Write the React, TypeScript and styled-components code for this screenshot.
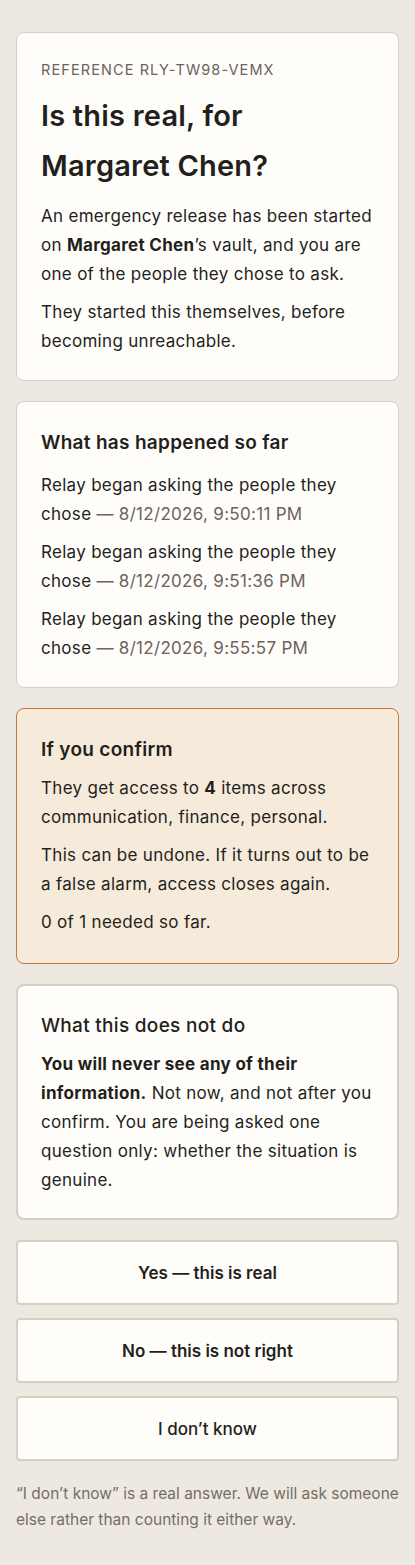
import React from "react";
import styled, { createGlobalStyle, css } from "styled-components";

const GlobalStyle = createGlobalStyle`
  * { box-sizing: border-box; }
  body {
    margin: 0;
    background: #eee9e0;
    font-family: Inter, "Noto Sans", sans-serif;
    color: #231f1c;
  }
`;

const Page = styled.main`
  display: flex;
  flex-direction: column;
  gap: 20px;
  padding: 32px 16px 40px;
`;

const Card = styled.section<{ $tone?: "plain" | "warm" | "strong" }>`
  background: #fffdf9;
  border: 1px solid #d6cfc3;
  border-radius: 8px;
  padding: 27px 24px 24px;
  ${({ $tone }) =>
    $tone === "warm" &&
    css`
      background: #f6eada;
      border-color: #c4773b;
      padding-bottom: 26px;
    `}
  ${({ $tone }) =>
    $tone === "strong" &&
    css`
      border: 2px solid #d6cfc3;
      padding: 26px 23px 23px;
    `}
`;

const Label = styled.div`
  font-size: 14.5px;
  letter-spacing: 1.1px;
  line-height: 20px;
  text-transform: uppercase;
  color: #6b635c;
  margin-bottom: 11px;
`;

const Title = styled.h1`
  font-size: 29px;
  font-weight: 600;
  letter-spacing: 0.2px;
  line-height: 50px;
  max-width: 300px;
  margin: 0 0 11px;
`;

const Heading = styled.h2<{ $weight?: number; $gap?: number }>`
  font-size: 19px;
  font-weight: ${({ $weight }) => $weight ?? 600};
  letter-spacing: 0.3px;
  line-height: 28px;
  margin: 0 0 ${({ $gap }) => $gap ?? 10}px;
`;

const Text = styled.p`
  font-size: 17px;
  letter-spacing: 0.3px;
  line-height: 29px;
  margin: 0 0 9px;
  &:last-child { margin-bottom: 0; }
`;

const Muted = styled.span`
  color: #6b635c;
`;

const Choices = styled.div`
  display: flex;
  flex-direction: column;
  gap: 13px;
`;

const Choice = styled.button<{ $weight?: number }>`
  height: 65px;
  width: 100%;
  background: #fffdf9;
  border: 2px solid #d6cfc3;
  border-radius: 4px;
  font-family: inherit;
  font-size: 17px;
  font-weight: ${({ $weight }) => $weight ?? 600};
  color: #231f1c;
  cursor: pointer;
`;

const Note = styled.p`
  font-size: 15.5px;
  line-height: 26px;
  color: #756d65;
  margin: 0;
`;

const events = [
  "8/12/2026, 9:50:11 PM",
  "8/12/2026, 9:51:36 PM",
  "8/12/2026, 9:55:57 PM",
];

const App: React.FC = () => {
  return (
    <>
      <GlobalStyle />
      <Page>
        <Card>
          <Label>Reference RLY-TW98-VEMX</Label>
          <Title>Is this real, for Margaret Chen?</Title>
          <Text>
            An emergency release has been started on <strong>Margaret Chen</strong>’s vault, and you
            are one of the people they chose to ask.
          </Text>
          <Text>They started this themselves, before becoming unreachable.</Text>
        </Card>

        <Card>
          <Heading $gap={14}>What has happened so far</Heading>
          {events.map((when, i) => (
            <Text key={i}>
              Relay began asking the people they chose <Muted>— {when}</Muted>
            </Text>
          ))}
        </Card>

        <Card $tone="warm">
          <Heading>If you confirm</Heading>
          <Text>
            They get access to <strong>4</strong> items across communication, finance, personal.
          </Text>
          <Text>This can be undone. If it turns out to be a false alarm, access closes again.</Text>
          <Text>0 of 1 needed so far.</Text>
        </Card>

        <Card $tone="strong">
          <Heading $weight={500}>What this does not do</Heading>
          <Text>
            <strong>You will never see any of their information.</strong> Not now, and not after you
            confirm. You are being asked one question only: whether the situation is genuine.
          </Text>
        </Card>

        <Choices>
          <Choice>Yes — this is real</Choice>
          <Choice>No — this is not right</Choice>
          <Choice $weight={500}>I don’t know</Choice>
        </Choices>

        <Note>
          “I don’t know” is a real answer. We will ask someone else rather than counting it either
          way.
        </Note>
      </Page>
    </>
  );
};

export default App;
